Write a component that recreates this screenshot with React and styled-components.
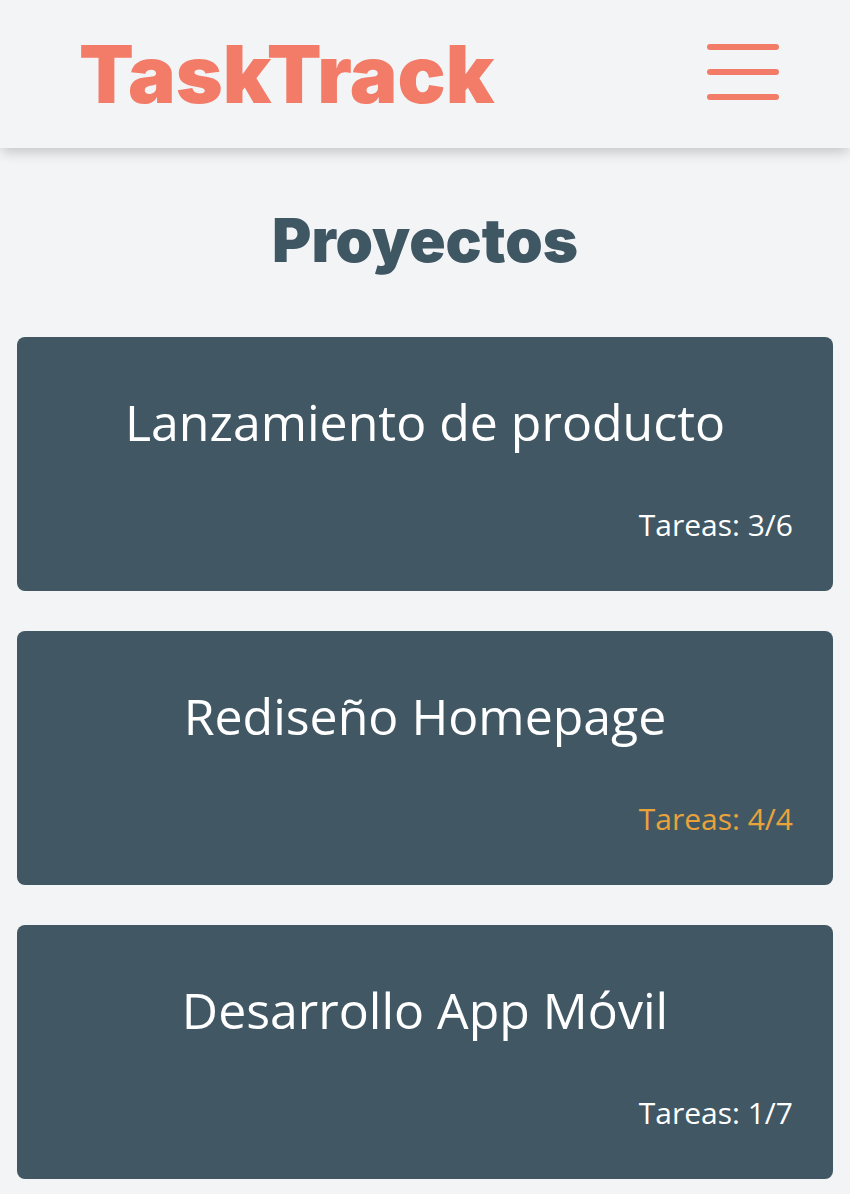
import React from "react";
import styled, { createGlobalStyle } from "styled-components";

const GlobalStyle = createGlobalStyle`
  * {
    box-sizing: border-box;
  }
  body {
    margin: 0;
    background-color: #f3f4f6;
    font-family: "Open Sans", "Noto Sans", sans-serif;
  }
`;

const Header = styled.header`
  height: 148px;
  display: flex;
  align-items: center;
  justify-content: space-between;
  padding: 0 71px 0 79px;
  background-color: #f3f4f6;
  box-shadow: 0 6px 12px -2px rgba(0, 0, 0, 0.2);
  position: relative;
`;

const Logo = styled.h1`
  margin: 0;
  font-family: "Inter", sans-serif;
  font-weight: 900;
  font-size: 80px;
  line-height: 1.21;
  color: #f27c68;
`;

const MenuButton = styled.button`
  width: 72px;
  height: 56px;
  padding: 0;
  border: none;
  background: none;
  display: flex;
  flex-direction: column;
  justify-content: space-between;
  cursor: pointer;
  margin-top: -4px;
`;

const MenuLine = styled.span`
  display: block;
  height: 6px;
  border-radius: 3px;
  background-color: #f27c68;
`;

const Main = styled.main`
  padding: 56px 17px 15px;
`;

const Title = styled.h2`
  margin: 0 0 60px;
  text-align: center;
  font-family: "Inter", sans-serif;
  font-weight: 900;
  font-size: 60px;
  line-height: 1.21;
  color: #3f5663;
`;

const List = styled.div`
  display: flex;
  flex-direction: column;
  gap: 40px;
`;

const Card = styled.div`
  height: 254px;
  padding: 51px 40px 45px;
  border-radius: 8px;
  background-color: #415864;
  color: #ffffff;
  display: flex;
  flex-direction: column;
  justify-content: space-between;
`;

const CardTitle = styled.h3`
  margin: 0;
  text-align: center;
  font-weight: 400;
  font-size: 50px;
  line-height: 1.362;
`;

const Count = styled.p`
  margin: 0;
  text-align: right;
  font-size: 30px;
  line-height: 1.362;
  color: ${(p) => (p.done ? "#eaa23b" : "#ffffff")};
`;

const projects = [
  { name: "Lanzamiento de producto", done: 3, total: 6 },
  { name: "Rediseño Homepage", done: 4, total: 4 },
  { name: "Desarrollo App Móvil", done: 1, total: 7 },
];

const App = () => {
  return (
    <>
      <GlobalStyle />
      <Header>
        <Logo>TaskTrack</Logo>
        <MenuButton aria-label="Menú">
          <MenuLine />
          <MenuLine />
          <MenuLine />
        </MenuButton>
      </Header>
      <Main>
        <Title>Proyectos</Title>
        <List>
          {projects.map((p) => (
            <Card key={p.name}>
              <CardTitle>{p.name}</CardTitle>
              <Count done={p.done === p.total}>
                Tareas: {p.done}/{p.total}
              </Count>
            </Card>
          ))}
        </List>
      </Main>
    </>
  );
};

export default App;
